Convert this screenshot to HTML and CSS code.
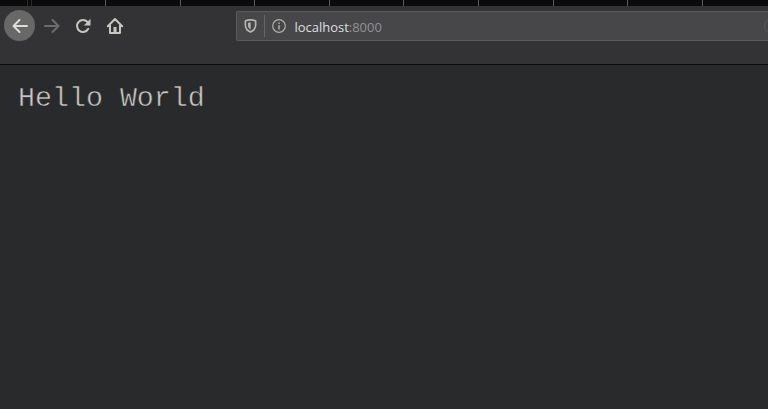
FILE: index.html
```html
<!DOCTYPE html>
<html lang="en">
<head>
<meta charset="utf-8">
<title>localhost:8000</title>
<link rel="stylesheet" href="styles.css">
</head>
<body>
<div class="tabs"><i class="first"></i><i class="second"></i><i class="third"></i><i></i><i></i><i></i><i></i><i></i><i></i><i></i><i></i></div>
<header class="toolbar">
  <nav class="nav">
    <button class="btn back" aria-label="Back"><svg viewBox="0 0 16 16"><path d="M15 8H2M7.5 2 1.5 8l6 6"/></svg></button>
    <button class="btn forward" aria-label="Forward"><svg viewBox="0 0 16 16"><path d="M1 8h13M8.5 2l6 6-6 6"/></svg></button>
    <button class="btn" aria-label="Reload"><svg viewBox="0 0 16 16"><path d="M12.500 4A6 6 0 1 0 13.300 10.800"/><path class="solid" d="M15.500.8v6.700H8.800z"/></svg></button>
    <button class="btn" aria-label="Home"><svg viewBox="0 0 16 16"><path d="M.8 8.2 8 1l7.200 7.200M3 7v8h10V7"/><path class="solid" d="M6.500 9h3v6h-3z"/></svg></button>
  </nav>
  <div class="url">
    <svg class="shield" viewBox="0 0 13 15"><path d="M6.500 1c2 0 3.900.4 5.500 1.200v4.300c0 3.500-2 6-5.500 7.500C3 12.500 1 10 1 6.500V2.200C2.600 1.400 4.500 1 6.500 1z"/><path class="half" d="M6.700 3.800c-1.100 0-2 .1-2.900.4v2.500c0 2 1 3.500 2.900 4.500z"/></svg>
    <span class="divider"></span>
    <svg class="info" viewBox="0 0 14 14"><circle cx="7" cy="7" r="6.300"/><path d="M7 6.200v4.300M7 3.500v1.500"/></svg>
    <span class="address">localhost<span class="port">:8000</span></span>
    <span class="edge"></span>
  </div>
</header>
<main class="page"><pre>Hello World</pre></main>
</body>
</html>
```
FILE: styles.css
```css
* { box-sizing: border-box; }
body {
  margin: 0;
  height: 409px;
  overflow: hidden;
  display: flex;
  flex-direction: column;
  background: #292a2c;
}
.tabs {
  height: 6px;
  flex: none;
  display: flex;
  overflow: hidden;
  background: #0b0b0c;
}
.tabs i {
  flex: none;
  width: 74.6px;
  border-right: 1px solid #5b5b5d;
}
.tabs .first { width: 28px; border-color: #29292b; }
.tabs .second { width: 4px; border-color: #29292b; }
.tabs .third { width: 74px; }
.toolbar {
  flex: none;
  height: 59px;
  display: flex;
  align-items: flex-start;
  padding: 4px 0 0 4px;
  background: #333335;
  border-bottom: 1px solid #0c0c0d;
}
.nav { display: flex; width: 231.500px; }
.btn {
  width: 31.500px;
  height: 31px;
  padding: 0;
  border: 0;
  border-radius: 50%;
  background: none;
  display: grid;
  place-items: center;
}
.btn svg { width: 16px; height: 16px; }
.btn.back { background: #686868; width: 31px; margin-right: 1px; }
.btn.back path { stroke: #deddd6; }
.btn.forward path { stroke: #6d6d6e; }
svg { flex: none; overflow: visible; }
svg path, svg circle {
  fill: none;
  stroke: #c8c5bf;
  stroke-width: 2;
  stroke-linecap: round;
  stroke-linejoin: round;
}
svg .solid { fill: #c8c5bf; stroke: none; }
.url {
  flex: 1;
  height: 30px;
  margin-top: 1px;
  display: flex;
  align-items: center;
  overflow: hidden;
  padding-left: 7px;
  background: #474749;
  border: 1px solid #5b5b5d;
  border-right: 0;
  border-radius: 2px 0 0 2px;
}
.shield { width: 13px; height: 14px; }
.shield path { stroke: #b5b4b0; stroke-width: 1.800; }
.shield .half { fill: #b5b4b0; stroke: none; }
.divider { width: 1px; height: 22px; margin: 0 7px; background: #666668; }
.info { width: 14px; height: 14px; }
.info circle, .info path { stroke: #b0afac; stroke-width: 1.200; }
.info path { stroke-width: 1.500; stroke-linecap: butt; }
.address {
  margin-left: 9px;
  padding-top: 1px;
  font: 13px/20px "Open Sans", "Noto Sans", sans-serif;
  color: #dcdee0;
  letter-spacing: -0.020px;
  white-space: nowrap;
}
.port { color: #929294; }
.edge {
  flex: none;
  width: 16px;
  height: 16px;
  margin: 0 -12px 0 auto;
  border: 1px solid #59595b;
  border-radius: 50%;
}
.page { padding: 17px 18px; }
.page pre {
  margin: 0;
  color: #c9c7c4;
  font: 28.300px/32px "Courier New", "Liberation Mono", monospace;
  -webkit-text-stroke: 0.500px #292a2c;
}
```
